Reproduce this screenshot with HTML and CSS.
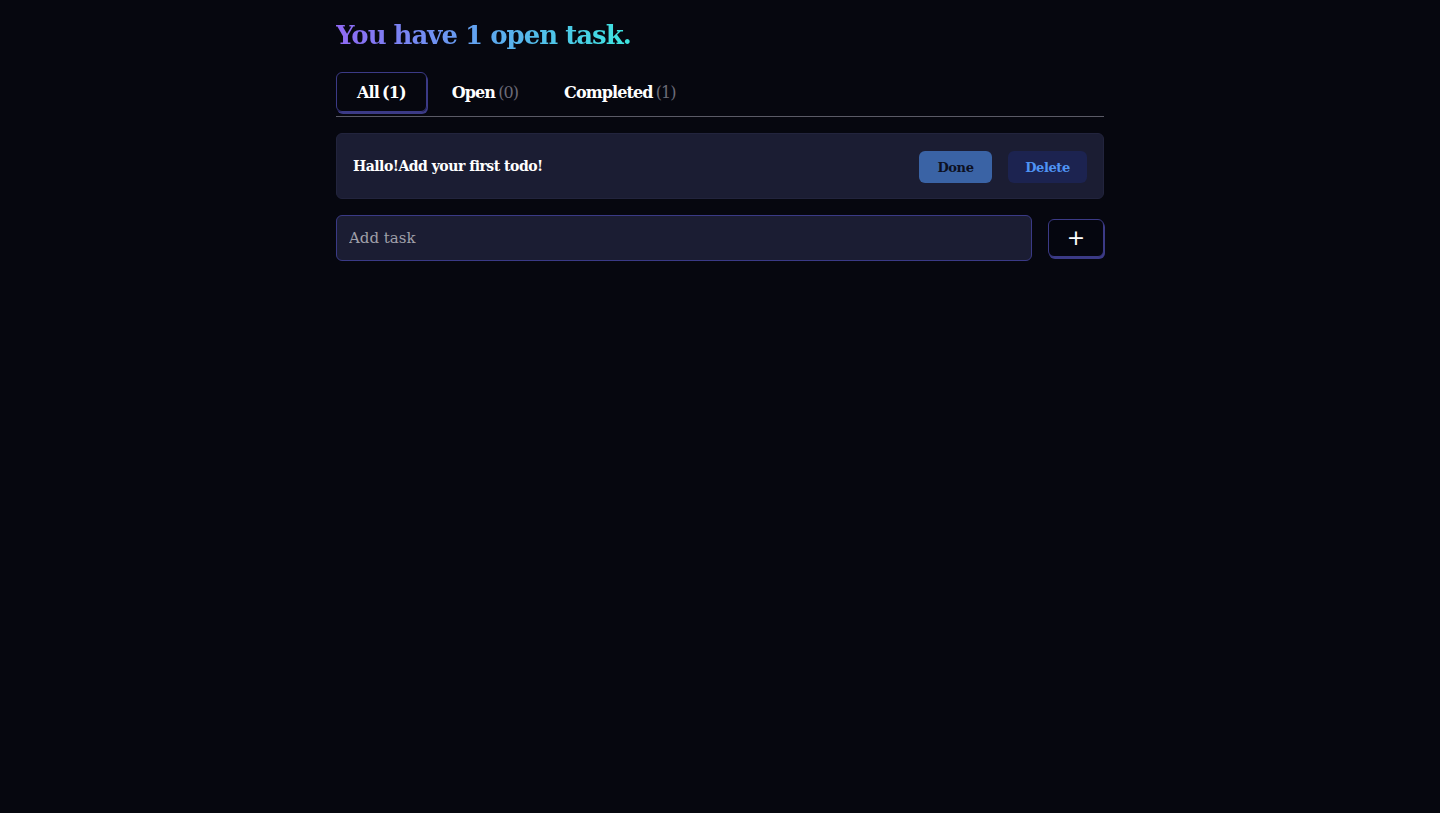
FILE: index.html
```html
<!DOCTYPE html>
<html lang="en">
<head>
<meta charset="utf-8">
<title>Todo</title>
<link rel="stylesheet" href="styles.css">
</head>
<body>
<main class="app">
  <h1 class="title">You have 1 open task.</h1>
  <nav class="tabs">
    <button class="tab active">All <span class="count">(1)</span></button>
    <button class="tab">Open <span class="count muted">(0)</span></button>
    <button class="tab">Completed <span class="count muted">(1)</span></button>
  </nav>
  <ul class="list">
    <li class="todo">
      <span class="todo-text">Hallo!Add your first todo!</span>
      <div class="actions">
        <button class="btn done">Done</button>
        <button class="btn delete">Delete</button>
      </div>
    </li>
  </ul>
  <form class="add">
    <input class="add-input" type="text" placeholder="Add task">
    <button class="add-btn" type="button">+</button>
  </form>
</main>
</body>
</html>
```
FILE: styles.css
```css
html, body {
  margin: 0;
  padding: 0;
  background: #06070f;
  color: #fff;
  font-family: "DejaVu Serif", "Liberation Serif", serif;
}
.app {
  width: 768px;
  margin: 0 auto;
  padding-top: 17px;
}
.title {
  margin: 0;
  font-size: 26px;
  font-weight: 700;
  line-height: 36px;
  letter-spacing: -1px;
  background: linear-gradient(90deg, #9068f5 0%, #5fa6f0 50%, #3de6e0 100%);
  -webkit-background-clip: text;
  background-clip: text;
  color: transparent;
  display: inline-block;
}
.tabs {
  display: flex;
  gap: 4px;
  margin-top: 19px;
  border-bottom: 1px solid #5a5a66;
  padding-bottom: 4px;
}
.tab {
  font-family: inherit;
  font-size: 16px;
  font-weight: 700;
  color: #fff;
  background: transparent;
  border: 1px solid transparent;
  border-radius: 6px;
  height: 40px;
  padding: 0 20px;
  letter-spacing: -0.9px;
  word-spacing: -1.5px;
  cursor: pointer;
}
.tab.active {
  border-color: #3b3a86;
  box-shadow: 1px 2px 0 #3b3a86;
}
.count { font-weight: 700; }
.count.muted { color: #6b6b78; font-weight: 400; }
.list {
  list-style: none;
  margin: 16px 0 0;
  padding: 0;
}
.todo {
  display: flex;
  align-items: center;
  justify-content: space-between;
  height: 64px;
  padding: 0 16px;
  background: #1b1d33;
  border: 1px solid #22243d;
  border-radius: 6px;
}
.todo-text {
  font-size: 14px;
  font-weight: 700;
  letter-spacing: -0.5px;
}
.actions {
  display: flex;
  gap: 16px;
}
.btn {
  font-family: inherit;
  font-size: 13px;
  font-weight: 700;
  height: 32px;
  border: none;
  border-radius: 6px;
  letter-spacing: -0.4px;
  margin-top: 2px;
  cursor: pointer;
}
.done {
  width: 73px;
  background: #3a63a5;
  color: #0d1122;
}
.delete {
  width: 79px;
  background: #1c2350;
  color: #4f93f4;
}
.add {
  display: flex;
  align-items: center;
  gap: 16px;
  margin-top: 16px;
}
.add-input {
  flex: 1;
  height: 46px;
  box-sizing: border-box;
  padding: 0 12px;
  background: #1b1d33;
  border: 1px solid #3a3a86;
  border-radius: 6px;
  color: #fff;
  font-family: inherit;
  font-size: 15px;
  outline: none;
}
.add-input::placeholder { color: #a0a0aa; }
.add-btn {
  width: 56px;
  height: 38px;
  box-sizing: border-box;
  background: #05060f;
  border: 1px solid #3b3a86;
  border-radius: 6px;
  box-shadow: 1px 2px 0 #3b3a86;
  color: #fff;
  font-family: "DejaVu Sans", sans-serif;
  font-size: 22px;
  line-height: 1;
  cursor: pointer;
}
```
